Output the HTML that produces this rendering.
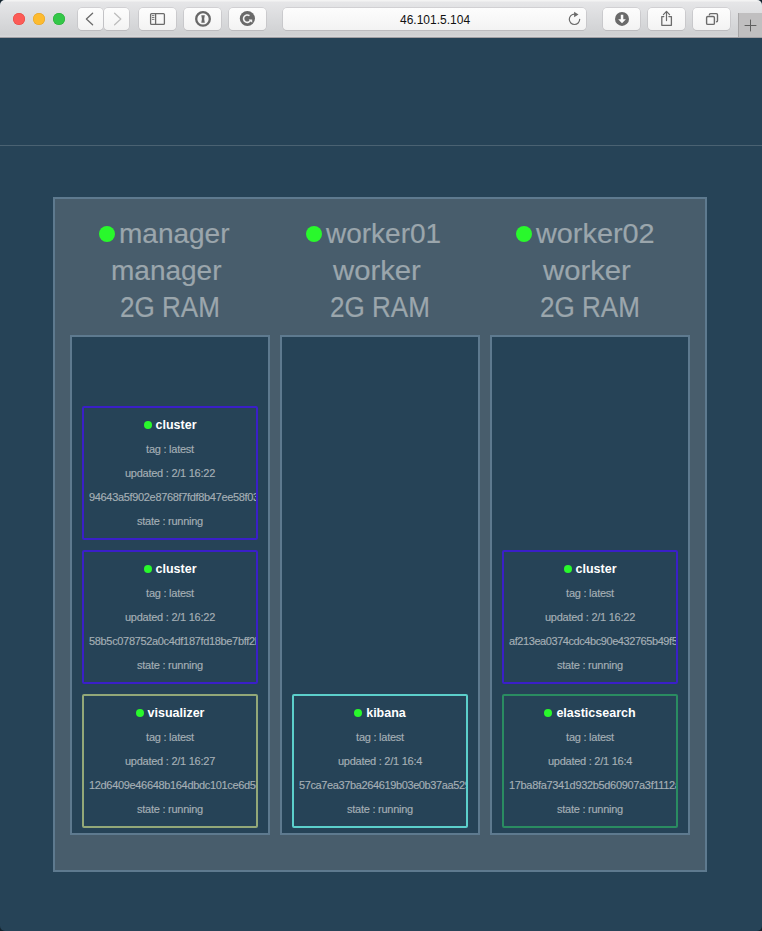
<!DOCTYPE html>
<html><head><meta charset="utf-8">
<style>
*{box-sizing:border-box;margin:0;padding:0}
html,body{width:762px;height:931px;overflow:hidden;background:#13222c;font-family:"Liberation Sans",sans-serif}
.abs{position:absolute}
#tb{position:absolute;left:0;top:0;width:762px;height:38px;background:linear-gradient(#f3f3f3,#f3f3f3 1px,#e6e6e8 2px,#dadbdd 50%,#cfd0d2 35px,#d6d7d9 36px,#d6d7d9 37px);border-bottom:1px solid #a19fa3;border-radius:5px 5px 0 0}
.tl{position:absolute;top:13px;width:12px;height:12px;border-radius:50%}
.btn{position:absolute;top:8px;height:22px;border-radius:4px;background:linear-gradient(#fdfdfd,#f3f3f3);box-shadow:0 0 0 0.6px #bfbec1,0 0.8px 0 #b3b2b5}
#line{position:absolute;left:0;top:145px;width:762px;height:1px;background:#4a6272}
#panel{position:absolute;left:53px;top:197px;width:654px;height:675px;background:#485d6c;border:2px solid #5e7a8f}
.col{position:absolute;top:335px;width:200px;height:500px;background:#264357;border:2px solid #5e7a8f}
.hl{position:absolute;font-size:28px;color:#9ba6ac;-webkit-text-stroke:0.2px #9ba6ac;white-space:pre;transform-origin:0 0;line-height:1}
.hdot{position:absolute;width:16px;height:16px;border-radius:50%;background:#29f82c}
.card{position:absolute;width:176px;height:134px;border:2px solid #3a1fc8;border-radius:2px;overflow:hidden;background:#264357}
.card .t{position:absolute;left:0;top:10px;width:172px;text-align:center;font-weight:bold;font-size:12.5px;color:#fff;white-space:nowrap;line-height:14px}
.card .t i{display:inline-block;width:8px;height:8px;border-radius:50%;background:#29f82c;margin-right:4px;vertical-align:0px}
.card .d{position:absolute;left:0;width:172px;text-align:center;font-size:11px;letter-spacing:-0.25px;color:#a5afb5;-webkit-text-stroke:0.15px #a5afb5;white-space:nowrap;line-height:12px}
.card .h{text-align:left;left:5px;letter-spacing:-0.33px}
</style></head><body>
<div class="abs" style="left:0;top:0;width:762px;height:931px;background:#264357;border-radius:5px"></div>
<div id="tb">
  <div class="tl" style="left:13px;background:#fc5b57;box-shadow:inset 0 0 0 0.5px #e2463f"></div>
  <div class="tl" style="left:33px;background:#fdbb2f;box-shadow:inset 0 0 0 0.5px #e0a028"></div>
  <div class="tl" style="left:53px;background:#33c748;box-shadow:inset 0 0 0 0.5px #27aa35"></div>
  <div class="btn" style="left:78px;width:25px"></div>
  <div class="btn" style="left:104px;width:25px"></div>
  <div class="btn" style="left:139px;width:37px"></div>
  <div class="btn" style="left:184px;width:37px"></div>
  <div class="btn" style="left:229px;width:37px"></div>
  <div class="btn" style="left:283px;width:303px"></div>
  <div class="btn" style="left:603px;width:37px"></div>
  <div class="btn" style="left:648px;width:37px"></div>
  <div class="btn" style="left:693px;width:37px"></div>
  <div class="abs" style="left:738px;top:13px;width:24px;height:24px;background:#c0bfc0;border-left:1px solid #a6a5a6"></div>
  <div class="abs" style="left:400px;top:13px;font-size:12px;color:#111;line-height:14px">46.101.5.104</div>
  <svg class="abs" style="left:0;top:0" width="762" height="38" viewBox="0 0 762 38">
    <g fill="none" stroke-linecap="round" stroke-linejoin="round">
      <path d="M92.6 13.2 L86.4 19 L92.6 24.7" stroke="#6b6b6b" stroke-width="1.3"/>
      <path d="M114.6 13.2 L120.8 19 L114.6 24.7" stroke="#bdbdbd" stroke-width="1.3"/>
      <rect x="150.6" y="13.6" width="13.8" height="10.8" rx="1" stroke="#6b6b6b" stroke-width="1.3"/>
      <path d="M155.6 13.6 V24.4" stroke="#6b6b6b" stroke-width="1.3"/>
      <path d="M152.3 15.6 H154 M152.3 17.5 H154 M152.3 19.4 H154" stroke="#6b6b6b" stroke-width="0.9"/>
      <circle cx="203" cy="18.9" r="6.8" stroke="#686868" stroke-width="2.3"/>
      <path d="M574.5 14.1 A5.2 5.2 0 1 0 579.7 19.3" stroke="#6b6b6b" stroke-width="1.2"/>
      <path d="M663.8 16.6 H661.8 V25.3 H671.4 V16.6 H668.9" stroke="#6b6b6b" stroke-width="1.3"/>
      <path d="M666.5 20.6 V11.6 M663.4 14.6 L666.5 11.4 L669.6 14.6" stroke="#6b6b6b" stroke-width="1.2"/>
      <rect x="706.6" y="16.5" width="7.8" height="7.9" rx="1.2" stroke="#6b6b6b" stroke-width="1.4"/>
      <path d="M709.4 14.8 Q709.4 13.6 710.6 13.6 H716.3 Q717.5 13.6 717.5 14.8 V20.6 Q717.5 21.8 716.6 21.8" stroke="#6b6b6b" stroke-width="1.4"/>
      <path d="M745 25.5 H756 M750.5 20 V31" stroke="#5f5f5f" stroke-width="1"/>
    </g>
    <path d="M201.3 15.2 H204.8 L204.2 19 L204.8 22.8 H201.3 L201.9 19 Z" fill="#686868"/>
    <circle cx="247.4" cy="18.5" r="7.6" fill="#6a6a6a"/>
    <path d="M249.5 15.7 A3.7 3.7 0 1 0 250.6 20.2" fill="none" stroke="#f4f4f4" stroke-width="1.6"/>
    <path d="M248.6 19.4 H252.2 V22.8 Z" fill="#f4f4f4"/>
    <path d="M574.1 11.7 L578.5 14.5 L574.1 17.2 Z" fill="#6b6b6b"/>
    <circle cx="622" cy="18.9" r="7" fill="#6a6a6a"/>
    <path d="M620.8 14.8 H623.3 V19.3 H625.9 L622 23.2 L618.2 19.3 H620.8 Z" fill="#fbfbfb"/>
  </svg>
</div>
<div id="line"></div>
<div id="panel"></div>
<div class="col" style="left:70px"></div>
<div class="col" style="left:280px"></div>
<div class="col" style="left:490px"></div>

<!-- headers -->
<div class="hdot" style="left:99px;top:226px"></div>
<div class="hl" style="left:119px;top:220px">manager</div>
<div class="hl" style="left:111px;top:257px">manager</div>
<div class="hl" style="left:120px;top:293px;transform:scale(0.93,1.06)">2G RAM</div>

<div class="hdot" style="left:306px;top:226px"></div>
<div class="hl" style="left:326px;top:220px">worker01</div>
<div class="hl" style="left:333px;top:257px;transform:scaleX(1.045)">worker</div>
<div class="hl" style="left:330px;top:293px;transform:scale(0.93,1.06)">2G RAM</div>

<div class="hdot" style="left:516px;top:226px"></div>
<div class="hl" style="left:536px;top:220px;transform:scaleX(1.03)">worker02</div>
<div class="hl" style="left:543px;top:257px;transform:scaleX(1.045)">worker</div>
<div class="hl" style="left:540px;top:293px;transform:scale(0.93,1.06)">2G RAM</div>

<!-- cards -->
<div class="card" style="left:82px;top:406px">
  <div class="t"><i></i>cluster</div>
  <div class="d" style="top:35px">tag : latest</div>
  <div class="d" style="top:59px">updated : 2/1 16:22</div>
  <div class="d h" style="top:83px">94643a5f902e8768f7fdf8b47ee58f03a1</div>
  <div class="d" style="top:107px">state : running</div>
</div>
<div class="card" style="left:82px;top:550px">
  <div class="t"><i></i>cluster</div>
  <div class="d" style="top:35px">tag : latest</div>
  <div class="d" style="top:59px">updated : 2/1 16:22</div>
  <div class="d h" style="top:83px">58b5c078752a0c4df187fd18be7bff2b1</div>
  <div class="d" style="top:107px">state : running</div>
</div>
<div class="card" style="left:82px;top:694px;border-color:#93a878">
  <div class="t"><i></i>visualizer</div>
  <div class="d" style="top:35px">tag : latest</div>
  <div class="d" style="top:59px">updated : 2/1 16:27</div>
  <div class="d h" style="top:83px">12d6409e46648b164dbdc101ce6d5e1</div>
  <div class="d" style="top:107px">state : running</div>
</div>
<div class="card" style="left:292px;top:694px;border-color:#5ccfcb">
  <div class="t"><i></i>kibana</div>
  <div class="d" style="top:35px">tag : latest</div>
  <div class="d" style="top:59px">updated : 2/1 16:4</div>
  <div class="d h" style="top:83px;letter-spacing:-0.38px">57ca7ea37ba264619b03e0b37aa529a1</div>
  <div class="d" style="top:107px">state : running</div>
</div>
<div class="card" style="left:502px;top:550px">
  <div class="t"><i></i>cluster</div>
  <div class="d" style="top:35px">tag : latest</div>
  <div class="d" style="top:59px">updated : 2/1 16:22</div>
  <div class="d h" style="top:83px;letter-spacing:-0.43px">af213ea0374cdc4bc90e432765b49f5a1</div>
  <div class="d" style="top:107px">state : running</div>
</div>
<div class="card" style="left:502px;top:694px;border-color:#2a8c61">
  <div class="t"><i></i>elasticsearch</div>
  <div class="d" style="top:35px">tag : latest</div>
  <div class="d" style="top:59px">updated : 2/1 16:4</div>
  <div class="d h" style="top:83px">17ba8fa7341d932b5d60907a3f1112a1</div>
  <div class="d" style="top:107px">state : running</div>
</div>
</body></html>
